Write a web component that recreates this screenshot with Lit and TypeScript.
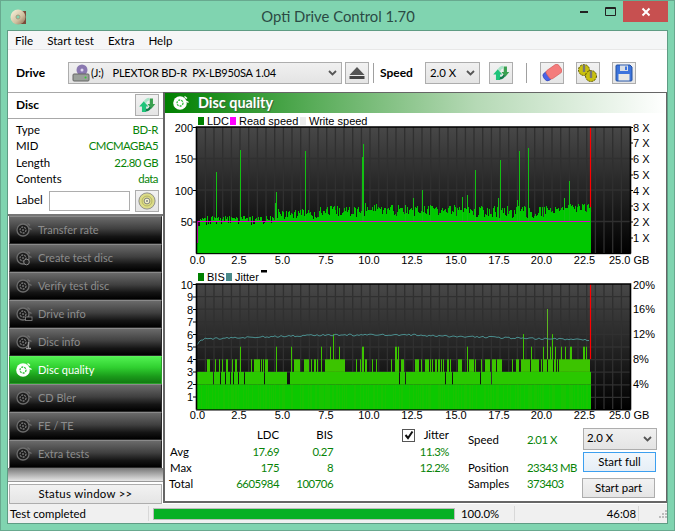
import { LitElement, html, css, svg } from "lit";
import { customElement, property } from "lit/decorators.js";

function rng(seed: number) {
  let s = seed;
  return () => {
    s = (s * 1664525 + 1013904223) >>> 0;
    return s / 4294967296;
  };
}

const X0 = 196.7;
const XEND = 591;
const AXIS = "'Liberation Sans', Arial, sans-serif";

const xLabels: [string, number][] = [
  ["0.0", 197.5], ["2.5", 239], ["5.0", 282.5], ["7.5", 326], ["10.0", 369],
  ["12.5", 412], ["15.0", 456], ["17.5", 499], ["20.0", 541.5], ["22.5", 584.5],
];

function grid(top: number, bottom: number, hLines: number[]) {
  const v = [];
  for (let i = 1; i < 50; i++) v.push(`M${(X0 + i * 8.667).toFixed(1)} ${top}V${bottom}`);
  const h = hLines.map((y) => `M197 ${y}H630`);
  return svg`<path d=${v.join("") + h.join("")} stroke="#303030" stroke-width="1.3" fill="none"/>`;
}

function axisFrame(top: number, bottom: number) {
  return svg`<path d="M196.500 ${bottom}V${top}H630.500V${bottom}" fill="none" stroke="#000" stroke-width="1.6"/>
    <path d="M196 ${bottom + 0.2}H631" stroke="#000" stroke-width="1"/>`;
}

function xAxis(y: number) {
  return svg`${xLabels.map(([t, x]) => svg`<text x=${x} y=${y} text-anchor="middle">${t}</text>`)}
    <text x="609" y=${y}>25.0 GB</text>`;
}

function ldcChart() {
  const r = rng(77);
  const spikes: Record<number, number> = {
    216: 172, 240: 150, 276: 192, 305: 151, 362: 157, 363: 144, 422: 190, 475: 170, 500: 160, 519: 151, 528: 148, 569: 181,
    275: 203, 405: 205, 430: 205, 462: 197, 467: 195, 517: 200, 564: 198, 498: 198, 413: 198,
  };
  const main: string[] = [];
  const peak: string[] = [];
  for (let x = 197; x < XEND; x++) {
    let top: number;
    if (x < 275) top = 220 + (r() < 0.4 ? 1 + r() * 4 : -r() * 4);
    else if (x < 365) top = 219 - r() * 11;
    else if (x < 470) top = 216 - r() * 11;
    else if (x < 555) top = 218 - r() * 12;
    else top = 212 - r() * 8;
    if (x >= 320 && x < 360) top -= 2;
    if (x >= 365 && x < 380) top -= 3;
    if (x < 200) top = 226;
    if (spikes[x]) peak.push(`M${x + 0.5} ${spikes[x]}V222`);
    main.push(`M${x + 0.5} ${top.toFixed(0)}V253.5`);
  }
  return svg`<svg class="plot" viewBox="165 113 501 154" width="501" height="154" font-family=${AXIS} font-size="11">
    <defs><linearGradient id="bg1" x1="0" y1="0" x2="0" y2="1"><stop offset="0" stop-color="#484848"/><stop offset="1" stop-color="#000"/></linearGradient></defs>
    <rect x="197" y="127" width="433" height="127" fill="url(#bg1)"/>
    ${grid(127, 253, [158.5, 190, 221.5])}
    <path d="M590.500 127V212" stroke="#ff0000" stroke-width="1.2"/>
    <path d=${main.join("")} stroke="#00c800" stroke-width="1" fill="none"/>
    <path d=${peak.join("")} stroke="#12c012" stroke-width="1" fill="none"/>
    <path d="M197.500 243V221.500H590" stroke="#e000cc" stroke-width="1.2" fill="none"/>
    ${axisFrame(127, 253.5)}
    <path d="M193 127.500h3M193 159h3M193 190.500h3M193 222h3M630 127.500h3M630 143h3M630 159h3M630 175h3M630 190.500h3M630 206h3M630 222h3M630 238h3" stroke="#000"/>
    ${[["200", 131.5], ["150", 163], ["100", 194.5], ["50", 226]].map(([t, y]) => svg`<text x="193" y=${y} text-anchor="end">${t}</text>`)}
    ${[8, 7, 6, 5, 4, 3, 2, 1].map((n, i) => svg`<text x="633" y=${131.5 + i * 15.8}>${n} X</text>`)}
    ${xAxis(264)}
    <rect x="198" y="117" width="6" height="8" fill="#008000"/>
    <text x="207" y="125" class="lg">LDC</text>
    <rect x="230" y="117" width="6" height="8" fill="#ff00ff"/>
    <text x="239" y="125" class="lg">Read speed</text>
    <rect x="300" y="117" width="6" height="8" fill="#ececec"/>
    <text x="309" y="125" class="lg">Write speed</text>
  </svg>`;
}

function bisChart() {
  const r = rng(4242);
  const base = 409.7;
  const u = 12.6;
  const ov: Record<number, number> = {};
  [213, 220, 225, 230, 233, 238, 244, 264, 287, 288, 289, 399, 405, 445, 452, 480, 491].forEach((x) => (ov[x] = 2));
  [240, 276, 291, 321, 330, 339, 362, 363, 395, 396, 398, 467, 531, 543, 550, 555, 561, 565, 570, 571, 583, 584, 586].forEach((x) => (ov[x] = 5));
  [333, 523, 552].forEach((x) => (ov[x] = 6));
  const bands: Record<string, string[]> = { a: [], b: [], c: [], d: [], e: [] };
  let cluster = 0;
  for (let x = 197; x < XEND; x++) {
    let v = 3;
    if (cluster > 0) { v = 4; cluster--; }
    else if (r() < 0.3) { v = 4; cluster = r() < 0.5 ? Math.floor(r() * 4) : 0; }
    if (x > 330 && x < 345) v = 4;
    if (x > 540 && v === 3 && r() < 0.6) v = 4;
    if (x > 520 && x < 530) v = 4;
    if (ov[x]) v = ov[x];
    const px = x + 0.5;
    const stripe = r();
    bands[stripe < 0.4 ? "a" : "b"].push(`M${px} ${base}V${base - 2 * u}`);
    bands["c"].push(`M${px} ${base - 2 * u}V${base - Math.min(v, 3) * u}`);
    if (v > 3) bands["d"].push(`M${px} ${base - 3 * u}V${base - v * u}`);
  }
  bands["e"].push(`M547.500 ${base - 4 * u}V309`);
  const jr = rng(9);
  let jit = "M197.500 344.500";
  for (let x = 199; x < 590; x += 2) {
    let y: number;
    if (x < 204) y = 344 - (x - 197) * 0.8;
    else if (x < 320) y = 339 - ((x - 204) / 116) * 4;
    else if (x < 420) y = 335;
    else y = 335.5 + ((x - 420) / 170) * 4.5;
    y += (jr() - 0.5) * 1.8;
    jit += `L${x} ${y.toFixed(1)}`;
  }
  return svg`<svg class="plot" viewBox="165 267 501 156" width="501" height="156" font-family=${AXIS} font-size="11">
    <defs><linearGradient id="bg2" x1="0" y1="0" x2="0" y2="1"><stop offset="0" stop-color="#484848"/><stop offset="1" stop-color="#000"/></linearGradient></defs>
    <rect x="197" y="284" width="433" height="126" fill="url(#bg2)"/>
    ${grid(284, 409, [296.6, 309.2, 321.8, 334.4, 347, 359.6, 372.2, 384.8, 397.4])}
    <path d="M590.500 284V359" stroke="#ff0000" stroke-width="1.2"/>
    <path d=${bands["a"].join("")} stroke="#18c400" fill="none"/>
    <path d=${bands["b"].join("")} stroke="#0cc800" fill="none"/>
    <path d=${bands["c"].join("")} stroke="#2ac800" fill="none"/>
    <path d=${bands["d"].join("")} stroke="#3cc400" fill="none"/>
    <path d=${bands["e"].join("")} stroke="#5cb820" fill="none"/>
    <path d=${jit} stroke="#4a8e8e" stroke-width="1" fill="none"/>
    ${axisFrame(284, 409.8)}
    <path d="M193 284.500h3M193 297h3M193 309.500h3M193 322h3M193 334.500h3M193 347h3M193 359.500h3M193 372h3M193 384.500h3M193 397h3" stroke="#000"/>
    ${[10, 9, 8, 7, 6, 5, 4, 3, 2, 1].map((n, i) => svg`<text x="193" y=${288.5 + i * 12.55} text-anchor="end">${n}</text>`)}
    ${["20%", "16%", "12%", "8%", "4%"].map((t, i) => svg`<text x="633" y=${288.5 + i * 24.9}>${t}</text>`)}
    ${xAxis(419)}
    <rect x="198" y="273" width="6" height="8" fill="#008000"/>
    <text x="207" y="281" class="lg">BIS</text>
    <rect x="226" y="273" width="6" height="8" fill="#4a8a8a"/>
    <text x="235" y="281" class="lg">Jitter</text>
    <rect x="261" y="270" width="6" height="2.500" fill="#000"/>
  </svg>`;
}

const refreshIcon = html`<svg viewBox="0 0 24 22" width="24" height="22">
  <path d="M3.500 12.500 L8.500 7 L13.500 12.500 L11 12.500 L11 18.500 L6.500 18.500 L6.500 12.500 Z" fill="#1fc47a"/>
  <path d="M8.500 7 C9.500 4.500 12 3 14.500 3 L14.500 6 C13 6 12 7 11 9.500 Z" fill="#a9e5c8"/>
  <path d="M12.500 10 L15 10 L15 4 L18.500 4 L18.500 10 L21 10 L16.800 15 Z" fill="#3aa050"/>
  <path d="M10.500 18 C13.500 18 15.500 16.500 16.800 14 L14.500 12.500 C14 14 13 15 11 15.200 Z" fill="#137a4a"/>
</svg>`;

function navIcon(active: boolean, extra: string) {
  const c = active ? "#fff" : "#6c6c6c";
  const inner = active ? "#2fbf3a" : "#777";
  return html`<svg class="nav-ic" viewBox="0 0 18 18" width="18" height="18">
    ${active
      ? svg`<circle cx="8" cy="9" r="6.800" fill="#fff"/>`
      : svg`<circle cx="8" cy="9" r="6" fill="#1c1c1c" stroke=${c} stroke-width="1.300"/>`}
    <circle cx="8" cy="9" r="3" fill="none" stroke=${inner} stroke-width="1.300" stroke-dasharray="2 1"/>
    <circle cx="8" cy="9" r="1" fill=${c}/>
    <path d="M12.500 2.500 L15 4.500 M14 7 L16.500 8.500" stroke=${c} stroke-width="1.400"/>
    ${extra === "i" ? svg`<path d="M13.500 9v6.500m-2.500 0h5" stroke="#999" stroke-width="1.300" fill="none"/>` : ""}
    ${extra === "d" ? svg`<rect x="10.500" y="12" width="6.500" height="3.500" fill="#111" stroke="#888" stroke-width=".8"/>` : ""}
    ${extra === "c" ? svg`<circle cx="11.500" cy="13" r="2.800" fill="#222" stroke="#888"/>` : ""}
  </svg>`;
}

const chevron = html`<svg class="chev" viewBox="0 0 9 6" width="9" height="6"><path d="M1 1 L4.500 4.500 L8 1" fill="none" stroke="#555" stroke-width="1.800"/></svg>`;

const navItems: [string, string, boolean][] = [
  ["Transfer rate", "", false], ["Create test disc", "c", false], ["Verify test disc", "", false],
  ["Drive info", "d", false], ["Disc info", "i", false], ["Disc quality", "", true],
  ["CD Bler", "", false], ["FE / TE", "", false], ["Extra tests", "", false],
];

@customElement("app-root")
export class AppRoot extends LitElement {
  @property({ type: String }) status = "Test completed";

  static styles = css`
    :host { display: block; width: 675px; height: 531px; }
    * { box-sizing: border-box; }
    .win {
      width: 675px; height: 531px; background: #80d4b0; border: 1px solid #68a98f;
      padding: 0 6px 6px 6px; display: flex; flex-direction: column;
      font: 11.4px Lato, sans-serif; color: #000; overflow: hidden;
    }
    .title { height: 29px; display: flex; align-items: flex-start; flex: none; }
    .app-ic { margin: 7px 0 0 3px; flex: none; }
    .title-text { flex: 1; text-align: center; font-size: 14.8px; color: #2b4a44; padding: 5px 0 0 78px; line-height: 20px; }
    .winbtns { display: flex; flex: none; height: 21px; }
    .wb { display: flex; align-items: center; justify-content: center; }
    .wb.min { width: 27px; }
    .wb.max { width: 26px; }
    .wb.close { width: 45px; background: #c75050; }
    .client { flex: 1; border: 1px solid #5f9c84; display: flex; flex-direction: column; background: #fff; min-height: 0; }
    .menu { height: 19px; flex: none; background: #f5f6f7; display: flex; gap: 14px; padding-left: 7px; align-items: center; border-bottom: 1px solid #e8e8e8; font-size: 11.6px; }
    .toolbar { height: 42px; flex: none; display: flex; align-items: center; padding: 4px 0 0 8px; }
    .tb-label { font-weight: 700; font-size: 12px; margin-bottom: 2px; }
    .drive { width: 52px; }
    .sel {
      height: 22px; border: 1px solid #adadad; background: linear-gradient(#f0f0f0, #e4e4e4);
      display: flex; align-items: center; position: relative; padding-left: 3px; flex: none;
    }
    .sel span { margin-bottom: 2px; }
    .sel.drive-sel { width: 274px; font-size: 11px; letter-spacing: -.2px; }
    .sel.speed-sel { width: 55px; padding-left: 4px; }
    .chev { margin-left: auto; margin-right: 4px; }
    .drive-ic { margin-right: 1px; }
    .model { margin-left: 9px; white-space: pre; }
    .btn {
      width: 24px; height: 22px; border: 1px solid #adadad; background: linear-gradient(#f2f2f2, #e5e5e5);
      display: flex; align-items: center; justify-content: center; flex: none; padding: 0;
    }
    .sep { width: 1px; height: 20px; background: #a0a0a0; flex: none; }
    .eject { margin-left: 3px; }
    .sep.a { margin: 0 6px 0 4px; }
    .speed-label { width: 45px; }
    .refresh { margin-left: 9px; }
    .sep.b { margin: 0 13px; }
    .tool { margin-left: 12px; }
    .body { flex: 1; display: flex; min-height: 0; }
    .left { width: 155px; flex: none; display: flex; flex-direction: column; border-top: 1px solid #a8a8a8; }
    .disc-head { height: 26px; flex: none; display: flex; align-items: center; justify-content: space-between; padding: 0 4px 1px 8px; border-bottom: 1px solid #a8a8a8; font-weight: 700; font-size: 12px; }
    .disc-head span { margin-bottom: 2px; }
    .info { height: 97px; flex: none; padding: 3px 5px 0 8px; border-bottom: 2px solid #777; }
    .row { display: flex; justify-content: space-between; height: 16.4px; line-height: 16.4px; }
    .val { color: #078307; letter-spacing: -.5px; }
    .label-row { display: flex; align-items: center; margin-top: 2px; height: 22px; }
    .label-text { width: 33px; flex: none; margin-bottom: 3px; }
    .label-input { width: 81px; height: 20px; border: 1px solid #adadad; background: #fff; margin-right: 5px; flex: none; }
    .nav { flex: none; display: flex; flex-direction: column; }
    .nav-item {
      height: 28px; margin: 0 1px; display: flex; align-items: center; padding-left: 5px; gap: 5px;
      color: #8c8c8c; border: 1px solid #2a2a2a; border-top-color: #8a8a8a; border-left-color: #6a6a6a;
      background: linear-gradient(#6a6a6a 0%, #404040 45%, #141414 75%, #000 100%);
      font-size: 11px;
    }
    .nav-item span { margin-bottom: 2px; }
    .nav-item.active {
      color: #fff; border-color: #2aa02a; border-top-color: #5df05d;
      background: linear-gradient(#50f050 0%, #30d030 40%, #1a9a1a 75%, #127a12 100%);
    }
    .nav-fill { height: 14px; flex: none; background: linear-gradient(#777, #e6e6e6); border-bottom: 1px solid #999; }
    .status-wrap { flex: 1; display: flex; align-items: flex-start; padding: 2px 1px 0 1px; }
    .status-btn { width: 153px; height: 20px; border: 1px solid #adadad; background: linear-gradient(#f2f2f2, #e5e5e5); text-align: center; line-height: 17px; letter-spacing: .3px; }
    .main { flex: 1; border: 1px solid #666; border-left-width: 2px; border-bottom: 2px solid #666; margin: 0 0 1px 0; display: flex; flex-direction: column; min-width: 0; background: #fff; overflow: hidden; }
    .panel-head {
      height: 20px; flex: none; display: flex; align-items: center; gap: 8px; padding-left: 7px;
      background: linear-gradient(90deg, #008000 0%, #5aad5a 30%, #b5d9b5 62%, #fff 100%);
      color: #fff; font-weight: 700; font-size: 14.4px;
      text-shadow: 1px 1px 0 #3a6a3a;
    }
    .panel-head span { margin-bottom: 2px; }
    .plot { display: block; flex: none; }
    .lg { font-size: 11px; }
    .stats { flex: 1; display: grid; grid-template-columns: 44px 66px 54px 82px 34px 19px 59px 56px auto; grid-template-rows: 17px 16px 16px 16px; padding: 4px 0 0 4px; line-height: 16px; }
    .r { text-align: right; }
    .stat-l { padding-left: 1px; }
    .low { margin-top: 5px; }
    .check { display: flex; align-items: center; justify-content: flex-end; margin-top: -1px; }
    .cb { width: 13px; height: 13px; border: 1px solid #555; background: #fff; display: flex; align-items: center; justify-content: center; flex: none; }
    .actions { grid-column: 9; grid-row: 1 / 5; display: flex; flex-direction: column; align-items: flex-start; margin-top: 1px; }
    .sel.small { width: 74px; height: 22px; padding-left: 3px; }
    .act { width: 73px; height: 21px; border: 1px solid #adadad; background: linear-gradient(#f2f2f2, #e5e5e5); text-align: center; line-height: 18px; }
    .act.full { border: 1.4px solid #3c9fef; margin: 2px 0 6px 0; background: linear-gradient(#f2f7fc, #e6eef6); }
    .act.part { margin-left: -1px; }
    .statusbar { height: 19px; flex: none; background: #f0f0f0; display: flex; align-items: center; }
    .sb-text { width: 140px; padding-left: 2px; flex: none; }
    .sb-div { width: 1px; height: 15px; background: #d8d8d8; flex: none; }
    .track { width: 302px; height: 12px; background: #e6e6e6; border: 1px solid #bcbcbc; margin: 0 6px 0 4px; flex: none; }
    .fill { height: 100%; background: #06b025; }
    .pct { width: 53px; flex: none; }
    .time { width: 123px; text-align: right; padding-right: 2px; flex: none; }
    .grip { margin-left: 19px; flex: none; }
  `;

  render() {
    return html`<div class="win">
      <div class="title">
        <svg class="app-ic" viewBox="0 0 18 18" width="18" height="18">
          <defs><linearGradient id="cd" x1="0" y1="0" x2="1" y2="1"><stop offset="0" stop-color="#fdf6e0"/><stop offset=".6" stop-color="#cfc0a0"/><stop offset="1" stop-color="#8a6a50"/></linearGradient></defs>
          <rect x="11" y="3" width="5" height="13" fill="#7a4a3a"/>
          <circle cx="8" cy="9" r="7.500" fill="url(#cd)"/>
          <circle cx="8" cy="9" r="2" fill="#80d4b0" stroke="#a89a80"/>
        </svg>
        <div class="title-text">Opti Drive Control 1.70</div>
        <div class="winbtns">
          <div class="wb min"><svg width="8" height="2"><rect width="8" height="2" fill="#222"/></svg></div>
          <div class="wb max"><svg width="11" height="9"><path d="M.5 .5H10.500V8.500H.5Z M.5 1.500H10.500" fill="none" stroke="#222"/></svg></div>
          <div class="wb close"><svg width="10" height="10"><path d="M1.500 1.500L8.500 8.500M8.500 1.500L1.500 8.500" stroke="#fff" stroke-width="2"/></svg></div>
        </div>
      </div>
      <div class="client">
        <div class="menu"><span>File</span><span>Start test</span><span>Extra</span><span>Help</span></div>
        <div class="toolbar">
          <div class="tb-label drive">Drive</div>
          <div class="sel drive-sel">
            <svg class="drive-ic" viewBox="0 0 18 18" width="18" height="18">
              <circle cx="10" cy="6" r="5.500" fill="#8a78b0"/>
              <circle cx="10" cy="6" r="1.500" fill="#e0d8f0"/>
              <rect x="1" y="10" width="16" height="7" rx="1" fill="#9aa09a" stroke="#666"/>
              <circle cx="13.500" cy="13.500" r="1" fill="#3c3"/>
            </svg>
            <span>(J:)</span><span class="model">PLEXTOR BD-R  PX-LB950SA 1.04</span>${chevron}
          </div>
          <button class="btn eject" aria-label="Eject"><svg viewBox="0 0 16 14" width="16" height="14"><path d="M8 1 L15.500 9 H.5Z" fill="#555"/><rect x=".5" y="10" width="15" height="3" fill="#444"/></svg></button>
          <div class="sep a"></div>
          <div class="tb-label speed-label">Speed</div>
          <div class="sel speed-sel"><span>2.0 X</span>${chevron}</div>
          <button class="btn refresh" aria-label="Refresh">${refreshIcon}</button>
          <div class="sep b"></div>
          <button class="btn" aria-label="Erase"><svg viewBox="0 0 20 18" width="20" height="18"><g transform="rotate(-35 10 9)"><rect x="0.500" y="4.500" width="8" height="9" rx="3.500" fill="#4a62e6" stroke="#2f43b0" stroke-width=".6"/><rect x="5" y="4" width="15" height="10" rx="2.500" fill="#f47c7c" stroke="#d05a5a" stroke-width=".6"/></g></svg></button>
          <button class="btn tool" aria-label="Settings"><svg viewBox="0 0 22 20" width="22" height="20"><circle cx="7" cy="7" r="5.500" fill="#c8c010" stroke="#5a5400" stroke-dasharray="2 1"/><rect x="5.800" y="2" width="2.400" height="7" fill="#777"/><circle cx="14" cy="13" r="5.500" fill="#c8c010" stroke="#5a5400" stroke-dasharray="2 1"/><rect x="12.800" y="8" width="2.400" height="7" fill="#777"/></svg></button>
          <button class="btn tool" aria-label="Save"><svg viewBox="0 0 18 18" width="18" height="18"><path d="M1 2 Q1 1 2 1H15L17 3V16Q17 17 16 17H2Q1 17 1 16Z" fill="#3d74dc" stroke="#24509f"/><rect x="5" y="1.500" width="8" height="5.500" fill="#d8dee6"/><rect x="10" y="2.500" width="2" height="3.500" fill="#3d74dc"/><rect x="3.500" y="10" width="11" height="6.500" fill="#e9e9e4"/></svg></button>
        </div>
        <div class="body">
          <div class="left">
            <div class="disc-head"><span>Disc</span><button class="btn" aria-label="Refresh disc">${refreshIcon}</button></div>
            <div class="info">
              <div class="row"><span>Type</span><span class="val">BD-R</span></div>
              <div class="row"><span>MID</span><span class="val">CMCMAGBA5</span></div>
              <div class="row"><span>Length</span><span class="val">22.80 GB</span></div>
              <div class="row"><span>Contents</span><span class="val">data</span></div>
              <div class="label-row"><span class="label-text">Label</span><div class="label-input"></div>
                <button class="btn" aria-label="Read label"><svg viewBox="0 0 20 20" width="18" height="18"><circle cx="10" cy="10" r="9" fill="#dcdc88" stroke="#888"/><circle cx="10" cy="10" r="5.500" fill="none" stroke="#b0b060"/><circle cx="10" cy="10" r="3.200" fill="#f4f4d0" stroke="#777"/><circle cx="10" cy="10" r="1.200" fill="#888"/></svg></button>
              </div>
            </div>
            <div class="nav">
              ${navItems.map(([t, x, a]) => html`<div class="nav-item ${a ? "active" : ""}">${navIcon(a, x)}<span>${t}</span></div>`)}
            </div>
            <div class="nav-fill"></div>
            <div class="status-wrap"><div class="status-btn">Status window &gt;&gt;</div></div>
          </div>
          <div class="main">
            <div class="panel-head">${navIcon(true, "")}<span>Disc quality</span></div>
            ${ldcChart()}
            ${bisChart()}
            <div class="stats">
              <div></div><div class="r">LDC</div><div class="r">BIS</div>
              <div class="check"><div class="cb"><svg viewBox="0 0 10 10" width="10" height="10"><path d="M1.500 5L4 8L8.500 1.500" fill="none" stroke="#111" stroke-width="2"/></svg></div></div>
              <div class="r">Jitter</div><div></div>
              <div class="low">Speed</div><div class="val low">2.01 X</div>
              <div class="actions">
                <div class="sel small"><span>2.0 X</span>${chevron}</div>
                <div class="act full">Start full</div>
                <div class="act part">Start part</div>
              </div>
              <div class="stat-l">Avg</div><div class="r val">17.69</div><div class="r val">0.27</div><div></div><div class="r val">11.3%</div><div></div><div></div><div></div>
              <div class="stat-l">Max</div><div class="r val">175</div><div class="r val">8</div><div></div><div class="r val">12.2%</div><div></div><div>Position</div><div class="val">23343 MB</div>
              <div>Total</div><div class="r val">6605984</div><div class="r val">100706</div><div></div><div></div><div></div><div>Samples</div><div class="val">373403</div>
            </div>
          </div>
        </div>
        <div class="statusbar">
          <div class="sb-text">${this.status}</div><div class="sb-div"></div>
          <div class="track"><div class="fill"></div></div>
          <div class="pct">100.0%</div><div class="sb-div"></div>
          <div class="time">46:08</div><div class="sb-div"></div>
          <svg class="grip" width="9" height="9"><path d="M7 1h2v2H7zM4 4h2v2H4zM7 4h2v2H7zM1 7h2v2H1zM4 7h2v2H4zM7 7h2v2H7z" fill="#bcbcbc"/></svg>
        </div>
      </div>
    </div>`;
  }
}
